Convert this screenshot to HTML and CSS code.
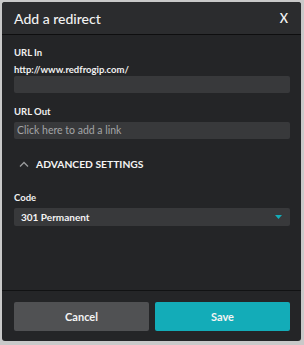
FILE: index.html
```html
<!DOCTYPE html>
<html lang="en">
<head>
    <meta charset="UTF-8">
    <title>Add a redirect</title>
    <link rel="stylesheet" href="styles.css">
</head>
<body>
    <div class="dialog">
        <div class="dialog-header">
            <span class="title">Add a redirect</span>
            <span class="close">X</span>
        </div>

        <div class="dialog-body">
            <div class="field">
                <div class="label">URL In</div>
                <div class="value">http://www.redfrogip.com/</div>
                <div class="input"></div>
            </div>

            <div class="field">
                <div class="label">URL Out</div>
                <div class="input placeholder">Click here to add a link</div>
            </div>

            <div class="advanced">
                <svg width="10" height="6" viewBox="0 0 10 6"><path d="M1 5.5 L5 1.5 L9 5.5" fill="none" stroke="#9a9b9d" stroke-width="1.3"/></svg>
                <span>ADVANCED SETTINGS</span>
            </div>

            <div class="field">
                <div class="label">Code</div>
                <div class="select">
                    <span>301 Permanent</span>
                    <svg width="7" height="4" viewBox="0 0 7 4"><path d="M0 0 H7 L3.5 4 Z" fill="#13acb8"/></svg>
                </div>
            </div>
        </div>

        <div class="dialog-footer">
            <button class="button cancel">Cancel</button>
            <button class="button save">Save</button>
        </div>
    </div>
</body>
</html>
```
FILE: styles.css
```css
body {
    margin: 0;
    padding: 2px 3px 4px 2px;
    background: #c9c9c9;
    font-family: Lato, "Open Sans", sans-serif;
}
.dialog {
    height: 339px;
    background: #242527;
    border-radius: 3px;
    display: flex;
    flex-direction: column;
    overflow: hidden;
}
.dialog-header {
    height: 32px;
    display: flex;
    align-items: center;
    justify-content: space-between;
    padding: 0 13px 0 12px;
    background: #2b2c2e;
    border-bottom: 1px solid #0e0e0f;
}
.title { color: #f2f2f2; font-size: 14px; font-weight: 500; }
.close { color: #f2f2f2; font-size: 12.5px; font-weight: 600; }
.dialog-body {
    flex: 1;
    padding: 11px 11px 0 12px;
}
.field { margin-bottom: 12px; }
.label {
    color: #f0f0f0;
    font-size: 9.5px;
    font-weight: 700;
    height: 13px;
    line-height: 13px;
    margin-bottom: 4px;
}
.value {
    color: #f0f0f0;
    font-size: 9.5px;
    font-weight: 700;
    line-height: 13px;
}
.input {
    height: 17px;
    background: #38393b;
    border-radius: 2px;
    font-size: 10.5px;
    line-height: 17px;
    padding: 0 3px;
}
.placeholder { color: #a3a4a6; }
.advanced {
    display: flex;
    align-items: center;
    gap: 7px;
    padding-left: 5px;
    height: 26px;
    color: #f4f4f4;
    font-size: 10.3px;
    font-weight: 700;
    margin-bottom: 14px;
}
.select {
    height: 18px;
    margin-top: 1px;
    background: #38393b;
    border-radius: 2px;
    display: flex;
    align-items: center;
    justify-content: space-between;
    padding: 0 8px 0 7px;
    color: #f4f4f4;
    font-size: 10px;
    font-weight: 700;
}
.dialog-footer {
    border-top: 1px solid #111213;
    padding: 11px 11px 10px 12px;
    display: flex;
    gap: 6px;
}
.button {
    flex: 1;
    height: 29px;
    border: none;
    border-radius: 2px;
    color: #f4f4f4;
    font-family: Lato, sans-serif;
    font-size: 11px;
    font-weight: 700;
}
.cancel { background: #505153; }
.save { background: #13acb8; }
```
